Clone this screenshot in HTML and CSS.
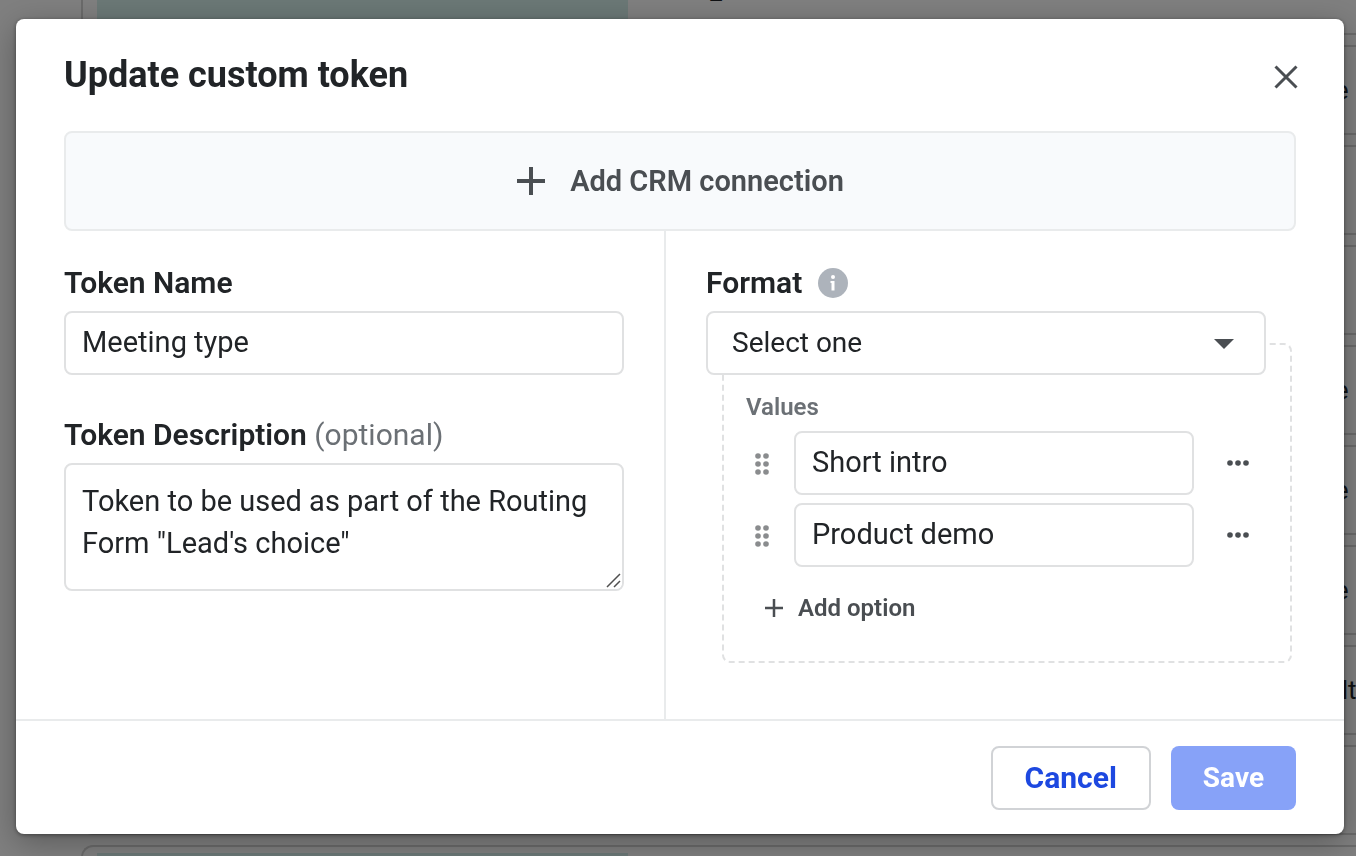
FILE: index.html
```
<!DOCTYPE html>
<html lang="en">
<head>
    <meta charset="utf-8">
    <title>Update custom token</title>
    <link rel="stylesheet" href="styles.css">
</head>
<body>
    <main class="page" aria-hidden="true">
        <div class="token-list">
            <div class="token-row"><span class="token-chip"></span><span class="token-key">user_custom</span></div>
            <div class="token-row"><span class="token-chip"></span><span class="token-key"></span><span class="token-kind">Full name</span></div>
            <div class="token-row"></div>
            <div class="token-row"></div>
            <div class="token-row"><span class="token-chip"></span><span class="token-key"></span><span class="token-kind">Full name</span></div>
            <div class="token-row"><span class="token-chip"></span><span class="token-key"></span><span class="token-kind">Full name</span></div>
            <div class="token-row"><span class="token-chip"></span><span class="token-key"></span><span class="token-kind">Full name</span></div>
            <div class="token-row"><span class="token-chip"></span><span class="token-key"></span><span class="token-kind">No default</span></div>
            <div class="token-row"></div>
            <div class="token-row"><span class="token-chip"></span></div>
        </div>
    </main>

    <div class="overlay">
        <form class="modal" role="dialog" aria-labelledby="modal-title">
            <header class="modal-header">
                <h1 id="modal-title">Update custom token</h1>
                <button type="button" class="icon-button close" aria-label="Close">
                    <svg width="24" height="24" viewBox="0 0 24 24"><path d="M1.5 1.5L22.5 22.5M22.5 1.5L1.5 22.5" stroke="#4a4e52" stroke-width="3" fill="none"/></svg>
                </button>
            </header>

            <div class="modal-body">
                <button type="button" class="crm-button">
                    <svg width="30" height="30" viewBox="0 0 30 30"><path d="M15 1V29M1 15H29" stroke="#4a4e52" stroke-width="4" fill="none"/></svg>
                    Add CRM connection
                </button>

                <div class="columns">
                    <section class="column column-left">
                        <label class="label" for="name">Token Name</label>
                        <input class="field" id="name" type="text" value="Meeting type">
                        <label class="label label-next" for="description">Token Description <span class="optional">(optional)</span></label>
                        <div class="description-wrap">
                            <textarea class="field description" id="description">Token to be used as part of the Routing Form "Lead's choice"</textarea>
                            <svg class="grip" width="16" height="16" viewBox="0 0 16 16"><path d="M1 14L14 1M8 14L14 8" stroke="#505050" stroke-width="1.5" fill="none"/></svg>
                        </div>
                    </section>

                    <section class="column column-right">
                        <div class="label format-label">
                            <label for="format">Format</label>
                            <svg width="30" height="30" viewBox="0 0 30 30"><circle cx="15" cy="15" r="15" fill="#adb3bb"/><circle cx="15" cy="9" r="2" fill="#fff"/><path d="M12.5 13H16.5V22.5H13.5V15H12.5Z" fill="#fff"/></svg>
                        </div>
                        <div class="select-wrap">
                            <select class="field format-select" id="format">
                                <option>Select one</option>
                            </select>
                            <svg class="caret" width="20" height="10" viewBox="0 0 20 10"><path d="M0 0H20L10 10Z" fill="#4a4e52"/></svg>
                        </div>

                        <div class="values" role="group" aria-labelledby="values-title">
                            <div class="values-title" id="values-title">Values</div>
                            <div class="value-row">
                                <svg class="drag" width="16" height="24" viewBox="0 0 16 24" fill="#8a8c8e"><circle cx="4" cy="5" r="2.8"/><circle cx="12" cy="5" r="2.8"/><circle cx="4" cy="13" r="2.8"/><circle cx="12" cy="13" r="2.8"/><circle cx="4" cy="21" r="2.8"/><circle cx="12" cy="21" r="2.8"/></svg>
                                <input class="field" type="text" value="Short intro" aria-label="Value 1">
                                <button type="button" class="icon-button" aria-label="More">
                                    <svg width="24" height="6" viewBox="0 0 24 6" fill="#4a4e52"><circle cx="4" cy="3" r="2.8"/><circle cx="12" cy="3" r="2.8"/><circle cx="20" cy="3" r="2.8"/></svg>
                                </button>
                            </div>
                            <div class="value-row">
                                <svg class="drag" width="16" height="24" viewBox="0 0 16 24" fill="#8a8c8e"><circle cx="4" cy="5" r="2.8"/><circle cx="12" cy="5" r="2.8"/><circle cx="4" cy="13" r="2.8"/><circle cx="12" cy="13" r="2.8"/><circle cx="4" cy="21" r="2.8"/><circle cx="12" cy="21" r="2.8"/></svg>
                                <input class="field" type="text" value="Product demo" aria-label="Value 2">
                                <button type="button" class="icon-button" aria-label="More">
                                    <svg width="24" height="6" viewBox="0 0 24 6" fill="#4a4e52"><circle cx="4" cy="3" r="2.8"/><circle cx="12" cy="3" r="2.8"/><circle cx="20" cy="3" r="2.8"/></svg>
                                </button>
                            </div>
                            <button type="button" class="add-option">
                                <svg width="20" height="20" viewBox="0 0 20 20"><path d="M10 1V19M1 10H19" stroke="#4a4e52" stroke-width="2.5" fill="none"/></svg>
                                Add option
                            </button>
                        </div>
                    </section>
                </div>
            </div>

            <footer class="modal-footer">
                <button type="button" class="button button-cancel">Cancel</button>
                <button type="submit" class="button button-save">Save</button>
            </footer>
        </form>
    </div>
</body>
</html>
```

FILE: styles.css
```
* {
    box-sizing: border-box;
}
body {
    margin: 0;
    background-color: #fff;
    color: #212427;
    font-family: Roboto, Arial, sans-serif;
    font-size: 28px;
}
button, input, textarea, select {
    font: inherit;
    color: inherit;
}
svg {
    display: block;
    flex: none;
}

/* token list behind the dialog, scrolled part way */
.page {
    height: 100vh;
    overflow: hidden;
}
.token-list {
    display: flex;
    flex-direction: column;
    gap: 10px;
    margin-top: -55px;
    margin-left: 81px;
}
.token-row {
    display: flex;
    align-items: center;
    flex: none;
    height: 90px;
    padding: 6px 14px;
    border: 2px solid #d5d5d5;
    border-right: 0;
    border-radius: 12px 0 0 12px;
    font-size: 26px;
    white-space: nowrap;
}
.token-chip {
    align-self: stretch;
    width: 531px;
    flex: none;
    background-color: #d6f0ed;
}
.token-key {
    width: 608px;
    flex: none;
    padding-left: 32px;
}

.overlay {
    position: fixed;
    inset: 0;
    display: flex;
    padding: 19px 12px 22px 16px;
    background-color: rgba(0, 0, 0, 0.5);
}
.modal {
    flex: 1;
    display: flex;
    flex-direction: column;
    background-color: #fff;
    border-radius: 8px;
    box-shadow: 0 8px 32px rgba(0, 0, 0, 0.3), 0 1px 4px rgba(0, 0, 0, 0.4);
}
.modal-header {
    display: flex;
    justify-content: space-between;
    align-items: center;
    height: 112px;
    padding: 0 46px 0 48px;
}
h1 {
    margin: 0;
    font-size: 36px;
    font-weight: 700;
}
.icon-button {
    padding: 0;
    border: 0;
    background: none;
    cursor: pointer;
}
.close {
    margin-top: 4px;
}
.modal-body {
    flex: 1;
    display: flex;
    flex-direction: column;
    padding: 0 48px;
}
.crm-button {
    display: flex;
    justify-content: center;
    align-items: center;
    gap: 24px;
    height: 100px;
    border: 2px solid #e9ebec;
    border-radius: 8px;
    background-color: #f8fafc;
    color: #4a4e52;
    font-size: 29px;
    font-weight: 600;
    cursor: pointer;
}
.columns {
    flex: 1;
    display: flex;
}
.column {
    flex: 1 1 0;
    min-width: 0;
    padding-top: 32px;
}
.column-left {
    padding-right: 40px;
    border-right: 2px solid #e9ebec;
}
.column-right {
    padding-left: 40px;
    padding-right: 30px;
}
.label {
    display: block;
    height: 48px;
    line-height: 40px;
    font-size: 30px;
    font-weight: 600;
}
.label-next {
    margin-top: 40px;
}
.optional {
    color: #6b7075;
    font-weight: 400;
}
.format-label {
    display: flex;
    gap: 16px;
}
.format-label svg {
    margin-top: 5px;
}
.field {
    display: block;
    width: 100%;
    height: 64px;
    padding: 0 16px 2px;
    border: 2px solid #e0e1e2;
    border-radius: 8px;
    background-color: #fff;
    font-size: 29px;
}
.description-wrap {
    position: relative;
}
.description {
    height: 128px;
    padding: 15px 16px;
    line-height: 42px;
    overflow: hidden;
    resize: vertical;
}
.grip {
    position: absolute;
    right: 2px;
    bottom: 2px;
    background-color: #fff;
    border-bottom-right-radius: 6px;
    pointer-events: none;
}
.select-wrap {
    position: relative;
    z-index: 1;
}
.format-select {
    padding: 0 24px 2px;
    font-size: 28px;
    appearance: none;
}
.caret {
    position: absolute;
    right: 32px;
    top: 28px;
    pointer-events: none;
}

/* dashed box starts behind the middle of the select */
.values {
    margin: -32px -26px 0 16px;
    padding: 46px 40px 28px 22px;
    border: 2px dashed #e0e1e2;
    border-radius: 8px;
}
.values-title {
    height: 40px;
    line-height: 32px;
    color: #6b7075;
    font-size: 24px;
    font-weight: 600;
}
.value-row {
    display: flex;
    align-items: center;
    margin-bottom: 8px;
}
.value-row .field {
    flex: 1;
    min-width: 0;
    margin: 0 32px 0 24px;
}
.drag {
    margin-left: 8px;
}
.add-option {
    display: flex;
    align-items: center;
    gap: 14px;
    height: 50px;
    margin-top: 16px;
    padding: 0 18px;
    border: 0;
    background: none;
    color: #4a4e52;
    font-size: 24px;
    font-weight: 600;
    cursor: pointer;
}

.modal-footer {
    display: flex;
    justify-content: flex-end;
    gap: 20px;
    padding: 25px 48px 24px;
    border-top: 2px solid #e9ebec;
}
.button {
    height: 64px;
    padding: 0 32px 2px;
    border: 0;
    border-radius: 8px;
    font-weight: 700;
    cursor: pointer;
}
.button-cancel {
    border: 2px solid #d1d3d6;
    background-color: #fff;
    color: #1d48e0;
    font-size: 30px;
}
.button-save {
    background-color: #87a2f8;
    color: #fff;
}
```
